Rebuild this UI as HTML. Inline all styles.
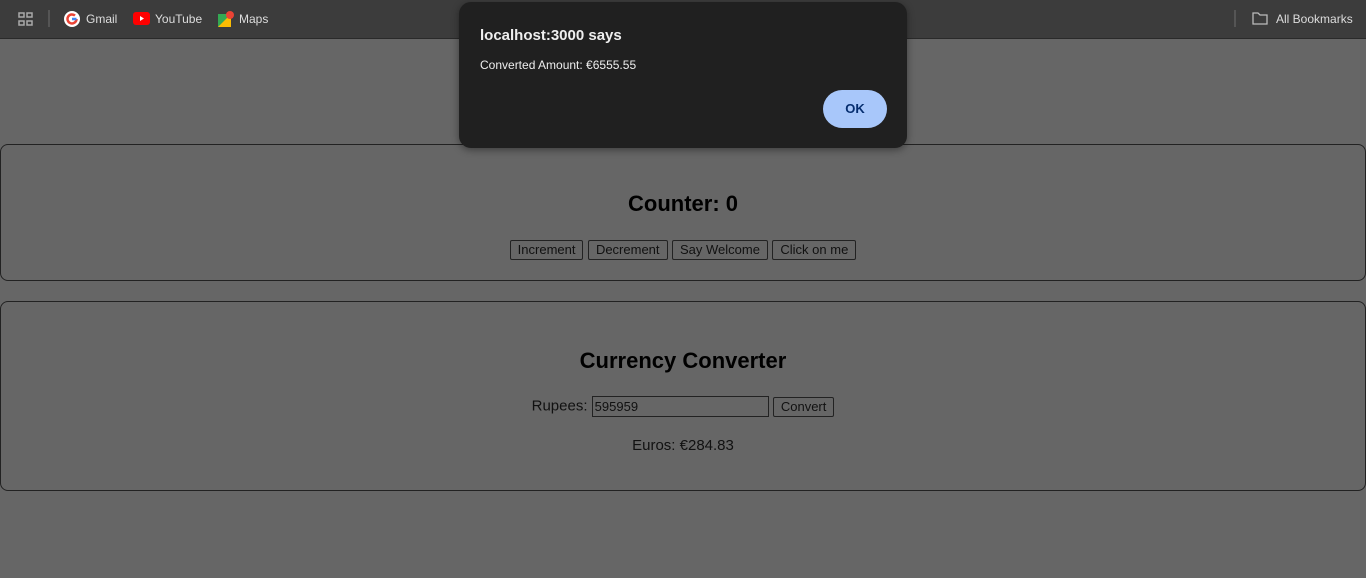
<!DOCTYPE html>
<html><head><meta charset="utf-8"><style>
*{box-sizing:border-box;margin:0;padding:0}
body{width:1366px;height:578px;background:#666;font-family:"Liberation Sans",sans-serif;position:relative;overflow:hidden}
.bar{position:absolute;left:0;top:0;width:1366px;height:39px;background:#3c3c3c;border-bottom:1px solid #2a2a2a;color:#ddd;font-size:12px}
.bar span{position:absolute;top:12px}
.card{position:absolute;left:0;width:1366px;border:1px solid #222;border-radius:8px;text-align:center}
h2{font-size:22px;font-weight:bold;color:#000}
.btn{display:inline-block;border:1px solid #222;border-radius:2px;font-size:13px;padding:1px 7px;color:#111;height:20px;line-height:16px}
.dlg{position:absolute;left:459px;top:2px;width:448px;height:146px;background:#202020;border-radius:12px;color:#eee;box-shadow:0 2px 8px rgba(0,0,0,.4)}
</style></head><body>
<div class="bar">
<svg style="position:absolute;left:18px;top:12px" width="15" height="14"><g fill="none" stroke="#aaa" stroke-width="1.5"><rect x="1" y="1" width="5" height="4"/><rect x="9" y="1" width="5" height="4"/><rect x="1" y="9" width="5" height="4"/><rect x="9" y="9" width="5" height="4"/></g></svg>
<div style="position:absolute;left:48px;top:10px;width:2px;height:17px;background:#555"></div>
<svg style="position:absolute;left:64px;top:11px" width="16" height="16"><circle cx="8" cy="8" r="8" fill="#fff"/><path d="M12.5 8A4.5 4.5 0 1 1 11 4.6" fill="none" stroke="#ea4335" stroke-width="2.5"/><path d="M8 8h4.5" stroke="#4285f4" stroke-width="2.5"/></svg>
<span style="left:86px">Gmail</span>
<svg style="position:absolute;left:133px;top:12px" width="17" height="13"><rect width="17" height="13" rx="3" fill="#f00"/><path d="M7 4v5l4-2.5z" fill="#fff"/></svg>
<span style="left:155px">YouTube</span>
<svg style="position:absolute;left:218px;top:11px" width="16" height="16"><rect x="0" y="3" width="13" height="13" fill="#34a853"/><path d="M0 16L13 3v13z" fill="#fbbc04"/><circle cx="12" cy="4" r="4" fill="#ea4335"/></svg>
<span style="left:239px">Maps</span>
<div style="position:absolute;left:1234px;top:10px;width:2px;height:17px;background:#555"></div>
<svg style="position:absolute;left:1252px;top:12px" width="16" height="13"><path d="M1 1h5l2 2h7v9H1z" fill="none" stroke="#bbb" stroke-width="1.3"/></svg>
<span style="left:1276px">All Bookmarks</span>
</div>
<div class="card" style="top:144px;height:137px">
<h2 style="margin-top:46px">Counter: 0</h2>
<div style="margin-top:23px"><span class="btn">Increment</span> <span class="btn">Decrement</span> <span class="btn">Say Welcome</span> <span class="btn">Click on me</span></div>
</div>
<div class="card" style="top:301px;height:190px">
<h2 style="margin-top:46px">Currency Converter</h2>
<div style="margin-top:22px;font-size:15px;color:#111">Rupees: <span style="display:inline-block;width:177px;height:21px;border:1px solid #222;text-align:left;font-size:13px;padding:2px;vertical-align:middle">595959</span> <span class="btn" style="vertical-align:middle">Convert</span></div>
<div style="margin-top:20px;font-size:15px;color:#111">Euros: €284.83</div>
</div>
<div class="dlg">
<div style="position:absolute;left:21px;top:25px;font-size:15px;font-weight:bold">localhost:3000 says</div>
<div style="position:absolute;left:21px;top:56px;font-size:12px">Converted Amount: €6555.55</div>
<div style="position:absolute;left:364px;top:88px;width:64px;height:38px;border-radius:19px;background:#a8c7fa;color:#062e6f;font-size:13px;font-weight:bold;text-align:center;line-height:38px">OK</div>
</div>
</body></html>
